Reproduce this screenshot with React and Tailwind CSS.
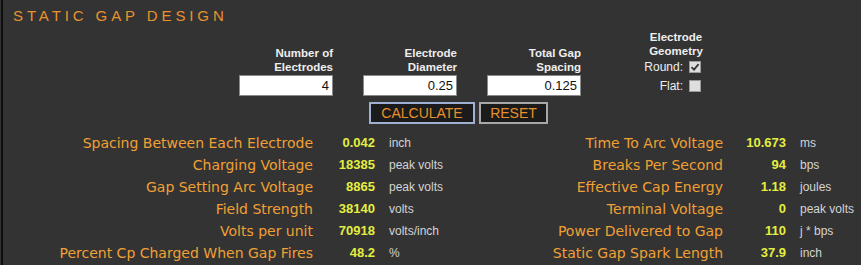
import React from 'react';

const left = [
  ['Spacing Between Each Electrode', '0.042', 'inch'],
  ['Charging Voltage', '18385', 'peak volts'],
  ['Gap Setting Arc Voltage', '8865', 'peak volts'],
  ['Field Strength', '38140', 'volts'],
  ['Volts per unit', '70918', 'volts/inch'],
  ['Percent Cp Charged When Gap Fires', '48.2', '%'],
];

const right = [
  ['Time To Arc Voltage', '10.673', 'ms'],
  ['Breaks Per Second', '94', 'bps'],
  ['Effective Cap Energy', '1.18', 'joules'],
  ['Terminal Voltage', '0', 'peak volts'],
  ['Power Delivered to Gap', '110', 'j * bps'],
  ['Static Gap Spark Length', '37.9', 'inch'],
];

function Field({ top, bottom, value }) {
  return (
    <div className="flex flex-col items-end w-[94px]">
      <div className="text-right text-[11.5px] font-bold leading-[14px] text-[#eeeeee]">
        {top}
        <br />
        {bottom}
      </div>
      <div className="mt-px w-[94px] h-[21px] bg-white border border-[#8a8a8a] flex items-center justify-end pr-[3px] text-[13px] text-[#111]">
        {value}
      </div>
    </div>
  );
}

function Check({ checked }) {
  return (
    <div className="w-[12px] h-[12px] bg-[#dedede] border border-[#9a9a9a] flex items-center justify-center">
      {checked && (
        <svg width="10" height="10" viewBox="0 0 10 10">
          <path d="M1.5 5.2 L4 7.6 L8.6 2.2" fill="none" stroke="#333" strokeWidth="1.8" />
        </svg>
      )}
    </div>
  );
}

function Row({ l, r }) {
  const label = "text-right text-[14px] text-[#f0a035] font-['DejaVu_Sans',Verdana,sans-serif]";
  const val = 'text-right text-[13px] font-bold text-[#e4ee40]';
  const unit = 'pl-[14px] text-[12px] text-[#d4d4d4] whitespace-nowrap';
  return (
    <div className="flex items-center h-[22px]">
      <div className={`w-[310px] ${label}`}>{l[0]}</div>
      <div className={`w-[62px] ${val}`}>{l[1]}</div>
      <div className={`w-[110px] ${unit}`}>{l[2]}</div>
      <div className={`w-[238px] ${label}`}>{r[0]}</div>
      <div className={`w-[63px] ${val}`}>{r[1]}</div>
      <div className={unit}>{r[2]}</div>
    </div>
  );
}

export default function App() {
  return (
    <div className="w-[861px] h-[265px] bg-[#333333] overflow-hidden font-['Liberation_Sans',Arial,sans-serif]">
      <div className="ml-px h-full border-l-2 border-[#0e0e0e]">
        {/* title */}
        <div className="pl-[10px] pt-[7px] text-[15px] leading-[18px] tracking-[3.9px] text-[#e8922e]">
          STATIC GAP DESIGN
        </div>

        {/* inputs + geometry */}
        <div className="flex items-end mt-[3px] h-[68px]">
          <div className="ml-[236px] flex items-end gap-[30px]">
            <Field top="Number of" bottom="Electrodes" value="4" />
            <Field top="Electrode" bottom="Diameter" value="0.25" />
            <Field top="Total Gap" bottom="Spacing" value="0.125" />
          </div>
          <div className="ml-[35px] w-[120px] flex flex-col items-center self-start mt-[2px]">
            <div className="text-center text-[11.5px] font-bold leading-[14px] text-[#eeeeee]">
              Electrode
              <br />
              Geometry
            </div>
            <div className="mt-[2px] self-stretch flex flex-col items-end gap-[5px] pr-[35px]">
              <div className="flex items-center gap-[6px] text-[12px] leading-[14px] text-[#eeeeee]">
                Round: <Check checked />
              </div>
              <div className="flex items-center gap-[6px] text-[12px] leading-[14px] text-[#eeeeee]">
                Flat: <Check />
              </div>
            </div>
          </div>
        </div>

        {/* buttons */}
        <div className="flex gap-[4px] ml-[366px] mt-[6px]">
          <div className="w-[106px] h-[22px] bg-[#1b1b1b] border-2 border-[#9fb0d2] flex items-center justify-center text-[14px] text-[#e8902a]">
            CALCULATE
          </div>
          <div className="w-[69px] h-[22px] bg-[#1b1b1b] border-2 border-[#a8a8a8] flex items-center justify-center text-[14px] text-[#e8902a]">
            RESET
          </div>
        </div>

        {/* results */}
        <div className="mt-[8px]">
          {left.map((l, i) => (
            <Row key={i} l={l} r={right[i]} />
          ))}
        </div>
      </div>
    </div>
  );
}
